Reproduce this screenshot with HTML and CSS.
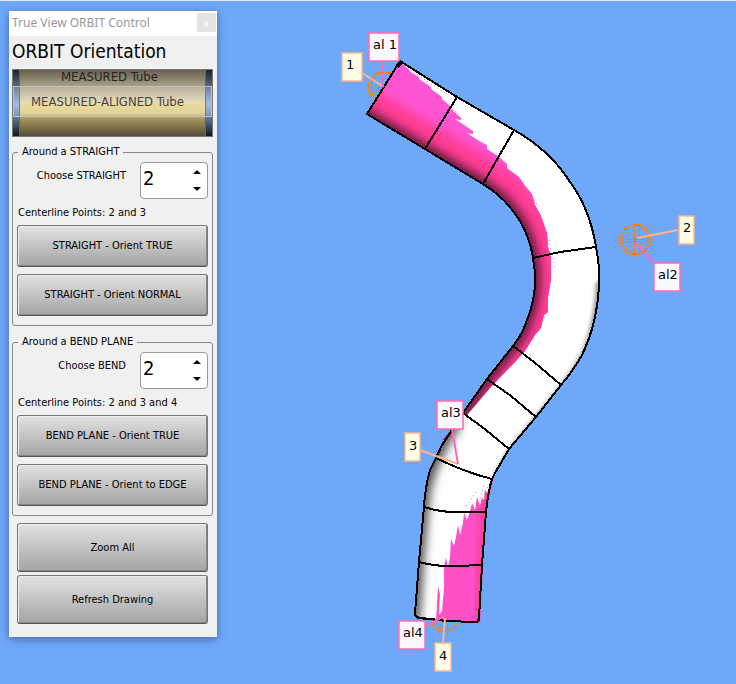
FILE: index.html
```html
<!DOCTYPE html>
<html lang="en">
<head>
<meta charset="utf-8">
<meta name="viewport" content="width=device-width, initial-scale=1">
<title>True View ORBIT Control</title>
<link rel="stylesheet" href="styles.css">
</head>
<body>
<main class="workspace">
  <svg class="scene" viewBox="0 0 736 684" role="img" aria-label="Tube view">
    <defs>
      <path id="tube" d="M400 61L457 97L514 130Q532 140 547 154Q560 166 570 182Q579 194 585 208Q593 227 596 247Q600 268 599 282Q598 322 582 355Q573 371 561 385L536 417L509 449L495 473L492 479Q488 492 486 512L482 565L479 618Q479 622 475 622L447 621L418 618Q415 617 415 613L419 562L424 507Q425 488 430 470L436 458L442 445L452 430L463 413L487 379L513 346Q523 333 527 320Q535 300 535 280Q535 268 533 258Q530 238 520 221Q506 198 483 184L425 149L367 114Z"/>
      <clipPath id="tubeClip"><use href="#tube"/></clipPath>
      <clipPath id="pinkClip">
        <path d="M400 61L412 73L419 77V79L431 87V89L442 97V99L450 106V108L461 118V120L455 119L473 131V134L467 133L479 141L487 145V149L498 156L507 164V168L519 177L526 187L532 194L535 205L541 216L547 233L548 247L551 257V280L548 297V312L544 315L541 328L535 335L525 351L515 362L510 367L490 388L467 415L463 413L487 379L513 346Q523 333 527 320Q535 300 535 280Q535 268 533 258Q530 238 520 221Q506 198 483 184L425 149L367 114Z"/>
      </clipPath>
      <clipPath id="lowClip">
        <path d="M493 480L489 488L487 493L485 490L484 500L482 498L480 506L477 497L475 510L472 503L470 511L467 520L464 513L463 523L460 535L458 525L456 537L454 546L451 539L450 557L448 568L446 557L444 568V588L442 611L439 615L440 594L438 586L436 621L480 623L486 512Z"/>
      </clipPath>
      <filter id="soft2" x="-30%" y="-30%" width="160%" height="160%"><feGaussianBlur stdDeviation="2"/></filter>
      <filter id="soft4" x="-30%" y="-30%" width="160%" height="160%"><feGaussianBlur stdDeviation="4"/></filter>
      <filter id="soft5" x="-30%" y="-30%" width="160%" height="160%"><feGaussianBlur stdDeviation="5"/></filter>
    </defs>

    <g class="marker">
      <circle cx="383" cy="87" r="15"/>
      <circle cx="386" cy="87" r="15"/>
      <path d="M367 87H384M367 89H384"/>
    </g>
    <g class="marker">
      <ellipse cx="634" cy="240" rx="14" ry="15"/>
      <ellipse cx="637" cy="239" rx="14" ry="15"/>
      <path d="M634 224V257M639 223V256M618 239H654M618 241H652"/>
    </g>
    <g class="marker">
      <circle cx="446" cy="617" r="15"/>
      <ellipse cx="446" cy="616" rx="11" ry="14"/>
      <path d="M445 620V633M447 620V634"/>
    </g>

    <use href="#tube" fill="#fff"/>
    <g clip-path="url(#tubeClip)">
      <path d="M456 420L442 443L434 460Q424 480 422 507L417 562L413 622" fill="none" stroke="#555" stroke-width="14" filter="url(#soft5)"/>
      <path d="M599 282Q598 322 584 355Q575 371 563 387L511 451L497 475" fill="none" stroke="#888" stroke-width="6" filter="url(#soft2)"/>
    </g>
    <g clip-path="url(#pinkClip)">
      <path d="M350 50H610V430H350Z" fill="#ff55d2"/>
      <path d="M350 104L425 149L483 184Q506 198 520 221Q530 238 533 258Q535 268 535 280Q535 300 527 320Q523 333 513 346L487 379L455 425" fill="none" stroke="#ff3c94" stroke-width="50" filter="url(#soft5)"/>
      <path d="M350 104L425 149L483 184Q506 198 520 221Q530 238 533 258Q535 268 535 280Q535 300 527 320Q523 333 513 346L487 379L455 425" fill="none" stroke="#681c3c" stroke-width="12" filter="url(#soft4)"/>
    </g>
    <g clip-path="url(#lowClip)">
      <path d="M430 475H500V625H430Z" fill="#ff50c8"/>
      <path d="M494 475L487 512L480 622" fill="none" stroke="#ff3c94" stroke-width="14" filter="url(#soft5)"/>
    </g>
    <path d="M442 440L451 430L454 432L447 439Z" fill="#d83280"/>
    <path class="specks" d="M404 66L450 96M445 105L462 116M411 69L430 81M454 116L462 119M534 200L539 207M549 240L551 252M554 258V268M546 313L538 332M517 357L501 374M498 378L493 388M494 472L487 489M484 486L480 499M476 492L465 508"/>

    <g class="edges">
      <use href="#tube"/>
      <path d="M457 97L425 149M514 130L483 184M596 247L560 252L533 258M513 346L534 362L561 385M487 379L511 396L536 417"/>
      <path class="edge-strong" d="M463 413L486 430L509 449M436 458Q464 472 492 479M424 507Q443 513 460 512L486 512M419 562Q438 567 456 566L482 565M415 614Q416 618 422 618L447 621L475 622Q479 622 479 617"/>
      <path class="edge-heavy" d="M401 62L397 67"/>
    </g>

    <path class="lead-cream" d="M362 73L384 87M678 230L637 238M420 450L458 464"/>
    <path class="lead-pink" d="M383 60V87M634 240L653 262M452 429L458 464M425 626L445 616"/>
    <path class="lead-cream" d="M443 642L445 618"/>

    <g class="tag-pink">
      <rect x="369" y="33" width="30" height="28"/><text x="373" y="49">al 1</text>
      <rect x="654" y="263" width="26" height="28"/><text x="658" y="279">al2</text>
      <rect x="437" y="401" width="26" height="28"/><text x="441" y="417">al3</text>
      <rect x="399" y="621" width="26" height="28"/><text x="403" y="637">al4</text>
    </g>
    <g class="tag-cream">
      <rect x="342" y="53" width="20" height="28"/><text x="346" y="69">1</text>
      <rect x="679" y="216" width="15" height="28"/><text x="683" y="232">2</text>
      <rect x="405" y="433" width="15" height="28"/><text x="409" y="450">3</text>
      <rect x="435" y="643" width="16" height="28"/><text x="439" y="660">4</text>
    </g>
  </svg>

  <section class="panel" aria-labelledby="panel-title">
    <header class="titlebar">
      <span id="panel-title">True View ORBIT Control</span>
      <button class="close" type="button" aria-label="Close">x</button>
    </header>
    <form class="body">
      <h1 class="heading">ORBIT Orientation</h1>
      <div class="wheel" role="radiogroup" aria-label="ORBIT Orientation">
        <label class="wheel-item"><input type="radio" name="tube">MEASURED Tube</label>
        <label class="wheel-item wheel-current"><input type="radio" name="tube" checked>MEASURED-ALIGNED Tube</label>
      </div>

      <fieldset class="group">
        <legend>Around a STRAIGHT</legend>
        <div class="choose">
          <label for="straight">Choose STRAIGHT</label>
          <div class="spin">
            <input id="straight" type="number" value="2">
            <div class="steps">
              <button type="button" aria-label="Next straight"><svg viewBox="0 0 8 4"><path d="M4 0L8 4H0Z"/></svg></button>
              <button type="button" aria-label="Previous straight"><svg viewBox="0 0 8 4"><path d="M0 0H8L4 4Z"/></svg></button>
            </div>
          </div>
        </div>
        <p class="points">Centerline Points: 2 and 3</p>
        <div class="stack">
          <button class="push" type="button">STRAIGHT - Orient TRUE</button>
          <button class="push" type="button">STRAIGHT - Orient NORMAL</button>
        </div>
      </fieldset>

      <fieldset class="group">
        <legend>Around a BEND PLANE</legend>
        <div class="choose">
          <label for="bend">Choose BEND</label>
          <div class="spin">
            <input id="bend" type="number" value="2">
            <div class="steps">
              <button type="button" aria-label="Next bend"><svg viewBox="0 0 8 4"><path d="M4 0L8 4H0Z"/></svg></button>
              <button type="button" aria-label="Previous bend"><svg viewBox="0 0 8 4"><path d="M0 0H8L4 4Z"/></svg></button>
            </div>
          </div>
        </div>
        <p class="points">Centerline Points: 2 and 3 and 4</p>
        <div class="stack">
          <button class="push" type="button">BEND PLANE - Orient TRUE</button>
          <button class="push" type="button">BEND PLANE - Orient to EDGE</button>
        </div>
      </fieldset>

      <div class="actions">
        <button class="push push-tall" type="button">Zoom All</button>
        <button class="push push-tall" type="button">Refresh Drawing</button>
      </div>
    </form>
  </section>
</main>
</body>
</html>
```
FILE: styles.css
```css
* { box-sizing: border-box; }

body {
  margin: 0;
  background: #6fa8f9;
  color: #000;
  font: 11px/14px "DejaVu Sans Condensed", "Noto Sans", sans-serif;
}

button, input { font: inherit; color: inherit; }

.workspace {
  display: grid;
  align-items: start;
  background: linear-gradient(#e6ebf2 1px, transparent 1px);
}
.scene, .panel { grid-area: 1 / 1; }
.scene { display: block; width: 100%; height: auto; }

/* Tube view */
.marker { fill: none; stroke: #ff7f00; stroke-width: 1; shape-rendering: crispEdges; }
.edges { fill: none; stroke: #000; stroke-width: 2; shape-rendering: crispEdges; }
.edge-strong { stroke-width: 2; }
.edge-heavy { stroke-width: 4; }
.specks { fill: none; stroke: #ff50b4; stroke-width: 1; stroke-dasharray: 1 3; }
.lead-cream { fill: none; stroke: #ffb48c; stroke-width: 2; }
.lead-pink { fill: none; stroke: #ff69b4; stroke-width: 2; }
.tag-pink rect { fill: #fcf8ff; stroke: #ff69b4; stroke-width: 1.5; }
.tag-cream rect { fill: #ffffe8; stroke: #ffb48c; stroke-width: 1.5; }
.scene text { font: 13px "DejaVu Sans", sans-serif; fill: #000; }

/* Control panel */
.panel {
  width: 208px;
  margin: 11px 0 16px 9px;
  background: #f0f0f0;
  box-shadow: 0 2px 8px rgba(20, 40, 90, 0.5);
}
.titlebar {
  display: flex;
  justify-content: space-between;
  align-items: center;
  height: 25px;
  padding: 0 1px 2px 3px;
  background: #fff;
  color: #999;
  font: 12px/16px "Noto Sans", sans-serif;
}
.close {
  width: 19px;
  height: 19px;
  padding: 0;
  border: 0;
  background: #e3e3e3;
  color: #fff;
  font-size: 10px;
  line-height: 16px;
}
.body { padding: 0 4px 13px 3px; }
.heading {
  margin: 0 0 6px;
  padding-top: 3px;
  font-size: 19px;
  line-height: 24px;
  font-weight: normal;
}

.wheel {
  position: relative;
  display: flex;
  flex-direction: column;
  height: 68px;
  overflow: hidden;
  border: 1px solid #777;
  background: linear-gradient(#66604f, #aaa288 25%, #dfd5b0 49%, #ead688 50%, #dacb8b 65%, #a2925b 75%, #574d38);
  font-size: 13px;
}
.wheel::before, .wheel::after {
  content: "";
  position: absolute;
  top: 0;
  bottom: 0;
  width: 6px;
  background: linear-gradient(#1c222c, #64789a 30%, #94b2e4 52%, #64789a 72%, #12161d);
}
.wheel::before { left: 0; border-right: 1px solid #6a6454; }
.wheel::after { right: 0; border-left: 1px solid #6a6454; }
.wheel-item {
  height: 16px;
  line-height: 14px;
  padding-right: 6px;
  text-align: center;
  color: #282522;
}
.wheel-current {
  position: relative;
  z-index: 1;
  height: 31px;
  padding-right: 10px;
  line-height: 30px;
  border: 1px solid #c4c0b8;
  background: rgba(255, 255, 255, 0.15);
  color: #474040;
}
.wheel input { appearance: none; width: 0; height: 0; margin: 0; }

.group {
  min-width: 0;
  margin: 8px 0 0;
  padding: 3px 4px 9px;
  border: 1px solid #888;
  border-radius: 3px;
}
.group + .group { margin-top: 9px; }
.group legend { margin-left: 1px; padding: 0 4px; }
.choose {
  display: grid;
  grid-template-columns: 1fr 68px;
  column-gap: 14px;
  text-align: right;
}
.choose label { padding-top: 7px; }
.spin {
  display: flex;
  justify-content: space-between;
  height: 37px;
  border: 1px solid #999;
  border-radius: 4px;
  background: #fff;
}
.spin input {
  width: 36px;
  min-width: 0;
  padding: 0 0 5px 2px;
  border: 0;
  background: none;
  outline: 0;
  font-size: 20px;
  appearance: textfield;
}
.spin input::-webkit-inner-spin-button { appearance: none; margin: 0; }
.steps { display: flex; flex-direction: column; width: 20px; }
.steps button {
  display: grid;
  place-items: center;
  flex: 1;
  padding: 0;
  border: 0;
  background: none;
}
.steps svg { display: block; width: 8px; height: 4px; }
.points { margin: 7px 0 5px 1px; }
.stack { display: grid; gap: 7px; }
.push {
  height: 42px;
  padding: 0 4px;
  border: 1px solid #777;
  border-bottom-color: #555;
  border-radius: 3px;
  background: linear-gradient(#e2e2e2, #a4a4a4);
  box-shadow: inset 1px 1px #eee, inset -1px -1px #888;
}
.push-tall { height: 49px; }
.actions { display: grid; gap: 3px; padding: 7px 5px 0; }
```
